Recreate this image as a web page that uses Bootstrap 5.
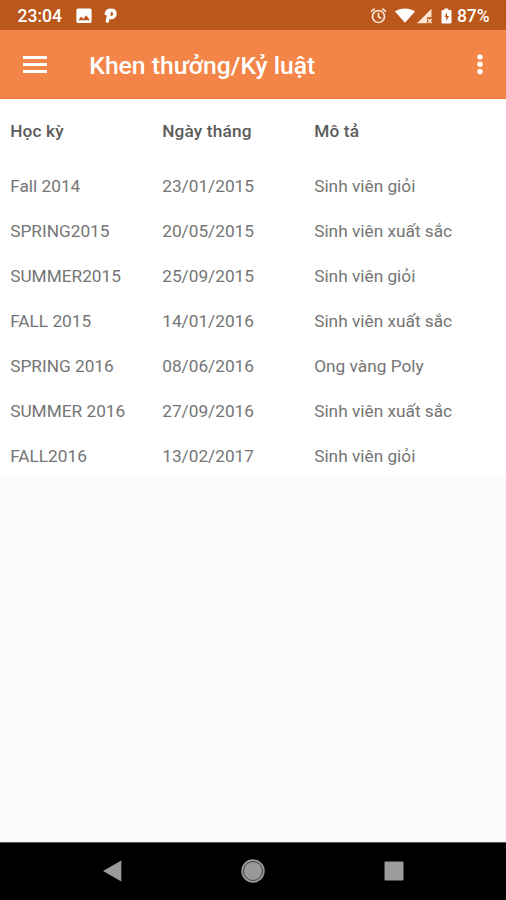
<!DOCTYPE html>
<html lang="vi">
<head>
<meta charset="utf-8">
<meta name="viewport" content="width=device-width, initial-scale=1">
<title>Khen thưởng/Kỷ luật</title>
<link href="https://cdn.jsdelivr.net/npm/bootstrap@5.3.0/dist/css/bootstrap.min.css" rel="stylesheet">
<style>
body{font-family:Roboto,"Noto Sans",sans-serif;background:#fafafa;height:900px;overflow:hidden}
svg{display:block;flex:none}
.status-bar{height:30px;background:#bb571a;padding:2px 16.5px 0 17.500px;font-size:17.5px;font-weight:500;line-height:28px}
.status-bar .clock{width:58.500px}
.status-bar .level{letter-spacing:-.1px;margin-left:5px}
.notice-p{margin-left:12px}
.wifi{margin-left:8px}
.signal{margin-left:2px}
.battery{margin-left:8px}
.app-bar{height:69px;background:#f48548;border-bottom:1px solid #ee7c2d;padding:0 22px 0 23px}
.app-bar h1{font-size:24.7px;font-weight:500;line-height:32px;margin-left:42.3px;padding-top:4px}
.records{table-layout:fixed;font-size:17.25px;--bs-table-bg:#fff}
.records th,.records td{line-height:20px;padding:14px 0 11px 10.200px;height:45px;color:#757575;white-space:nowrap}
.records th{height:63px;font-weight:500;color:#5c5c5c;padding:1px 0 0 10.200px;vertical-align:middle;letter-spacing:.15px}
.records .first-col,.records .date-col{width:152px}
.nav-keys{height:58px;background:#000;border-top:1px solid #555;padding:0 102px 2px}
</style>
</head>
<body class="d-flex flex-column">
<header>
  <div class="status-bar d-flex align-items-center text-white">
    <span class="clock">23:04</span>
    <svg width="16" height="16" viewBox="0 0 16 16"><path fill="#fff" fill-rule="evenodd" d="M2 .5h12a1.6 1.6 0 0 1 1.6 1.6v11.4a1.6 1.6 0 0 1-1.6 1.6H2a1.6 1.6 0 0 1-1.6-1.6V2.100A1.600 1.600 0 0 1 2 .5ZM2.300 12.300h11.600L10.200 7.200l-3 3.700-2-2.400Z"/></svg>
    <svg class="notice-p" width="14" height="16" viewBox="0 0 14 16"><path fill="none" stroke="#fff" stroke-width="3.400" stroke-linecap="round" stroke-linejoin="round" d="M2.300 5.700C2.700 3.400 4.300 2.200 6.800 2.200c2.800 0 4.200 1.500 4.200 3.600S9.500 9.600 7 9.600H5.700M5.200 5 3.300 13.200"/></svg>
    <div class="d-flex align-items-center ms-auto">
      <svg width="17" height="18" viewBox="0 0 17 18"><g fill="none" stroke="#ffe9dc" stroke-width="1.700"><circle cx="8.500" cy="9.500" r="6"/><path d="M1 4.700 4.700 1.600M16 4.700l-3.700-3.100M8.500 5.700v4.100l2.700 1.700"/></g></svg>
      <svg class="wifi" width="20" height="16" viewBox="0 0 20 16"><path fill="#fff" d="M0 3.600C5.500-.7 14.500-.7 20 3.600L10 14.700Z"/></svg>
      <svg class="signal" width="16" height="16" viewBox="0 0 16 16"><path fill="#ffe4d3" d="M0 15.200 14.500.8v8.400H10v6Z"/><path fill="none" stroke="#ffe4d3" stroke-width="1.500" d="m11 11 3.700 3.900m0-3.900L11 14.900"/></svg>
      <svg class="battery" width="11" height="16" viewBox="0 0 11 16"><path fill="#fff" fill-rule="evenodd" d="M3.300.5h4v1.600h2.200q1 0 1 1v11.400q0 1-1 1h-8q-1 0-1-1V3.100q0-1 1-1h1.800ZM6.100 4.300 3.500 9.100h1.700v4l2.900-5H6.100Z"/></svg>
      <span class="level">87%</span>
    </div>
  </div>
  <nav class="app-bar d-flex align-items-center text-white">
    <svg width="24" height="18" viewBox="0 0 24 18" role="img" aria-label="Menu"><path stroke="#fff" stroke-width="2.800" d="M0 2.500h24M0 9.500h24M0 16.500h24"/></svg>
    <h1 class="mb-0">Khen thưởng/Kỷ luật</h1>
    <svg class="ms-auto" width="8" height="22" viewBox="0 0 8 22"><g fill="#fff"><circle cx="4" cy="3.900" r="2.700"/><circle cx="4" cy="11.200" r="2.700"/><circle cx="4" cy="18.500" r="2.700"/></g></svg>
  </nav>
</header>
<main class="flex-grow-1">
  <table class="records table table-borderless mb-0">
    <thead><tr><th class="first-col">Học kỳ</th><th class="date-col">Ngày tháng</th><th>Mô tả</th></tr></thead>
    <tbody>
      <tr><td>Fall 2014</td><td>23/01/2015</td><td>Sinh viên giỏi</td></tr>
      <tr><td>SPRING2015</td><td>20/05/2015</td><td>Sinh viên xuất sắc</td></tr>
      <tr><td>SUMMER2015</td><td>25/09/2015</td><td>Sinh viên giỏi</td></tr>
      <tr><td>FALL 2015</td><td>14/01/2016</td><td>Sinh viên xuất sắc</td></tr>
      <tr><td>SPRING 2016</td><td>08/06/2016</td><td>Ong vàng Poly</td></tr>
      <tr><td>SUMMER 2016</td><td>27/09/2016</td><td>Sinh viên xuất sắc</td></tr>
      <tr><td>FALL2016</td><td>13/02/2017</td><td>Sinh viên giỏi</td></tr>
    </tbody>
  </table>
</main>
<footer class="nav-keys d-flex align-items-center justify-content-between">
  <svg width="20" height="22" viewBox="0 0 20 22"><path fill="#9b9b9b" d="M1 11 19.300.5v21Z"/></svg>
  <svg width="24" height="24" viewBox="0 0 24 24"><circle cx="12" cy="12" r="11.700" fill="#999"/><circle cx="12" cy="12" r="9.500" fill="#999" stroke="#444" stroke-width="1"/></svg>
  <svg width="20" height="20" viewBox="0 0 20 20"><rect x=".5" y=".5" width="19" height="19" rx="1" fill="#9b9b9b"/></svg>
</footer>
<script src="https://cdn.jsdelivr.net/npm/bootstrap@5.3.0/dist/js/bootstrap.bundle.min.js"></script>
</body>
</html>
